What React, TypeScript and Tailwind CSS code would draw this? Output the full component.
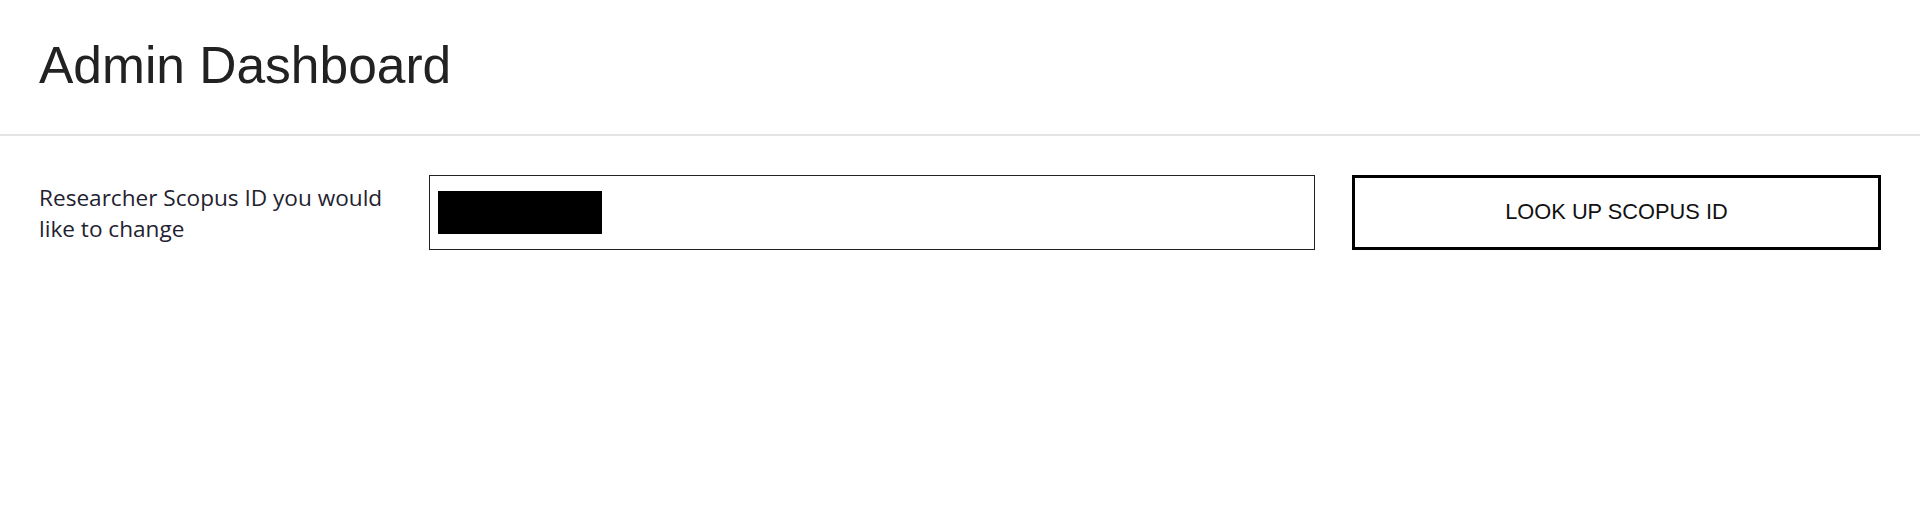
import React from "react";

const App: React.FC = () => {
  return (
    <div className="min-h-[523px] w-full bg-white">
      {/* Header */}
      <header className="h-[136px] border-b-2 border-[#e4e4e4] px-[39px] pt-[39px]">
        <h1 className="font-['Liberation_Sans',Arial,sans-serif] text-[51.5px] font-normal leading-[52px] text-[#222222]">
          Admin Dashboard
        </h1>
      </header>

      {/* Lookup form */}
      <div className="grid grid-cols-[353px_1fr_529px] items-center gap-[37px] px-[39px] pt-[39px]">
        <label className="font-['Open_Sans','Noto_Sans',sans-serif] text-[22.6px] leading-[31px] text-[#1f2230]">
          Researcher Scopus ID you would like to change
        </label>

        <div className="flex h-[75px] items-center border border-[#222222] px-[8px]">
          <span className="block h-[43px] w-[164px] bg-black" />
        </div>

        <button className="h-[75px] border-[3px] border-black bg-white font-['Liberation_Sans',Arial,sans-serif] text-[21.8px] uppercase text-[#111111]">
          Look up Scopus ID
        </button>
      </div>
    </div>
  );
};

export default App;
